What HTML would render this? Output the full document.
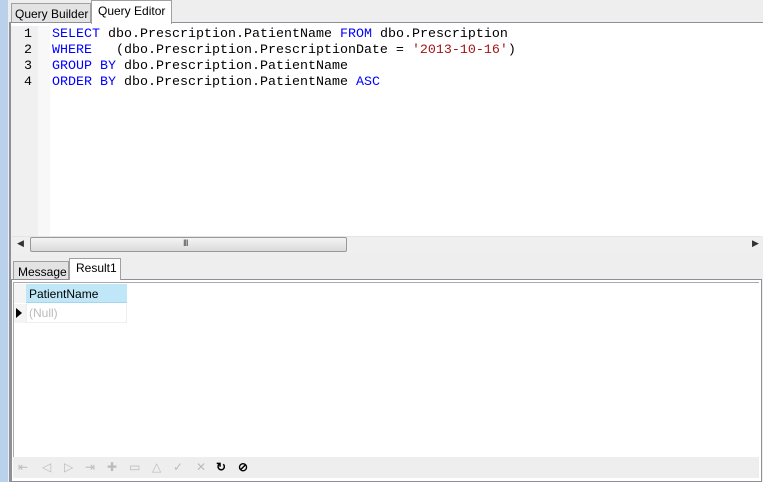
<!DOCTYPE html>
<html><head><style>
*{margin:0;padding:0;box-sizing:border-box}
body{width:763px;height:482px;background:#eeeeee;position:relative;overflow:hidden;font-family:"Liberation Sans",sans-serif;font-size:12px;color:#000}
.a{position:absolute}
.code{font-family:"Liberation Mono",monospace;font-size:13.33px;line-height:16px;white-space:pre}
.k{color:#0000ff}.s{color:#a31515}
.ic{position:absolute;top:460px;font-size:12px;color:#bbb}
</style></head><body>
<div class="a" style="left:0;top:0;width:8px;height:482px;background:#b9d1ea"></div>
<div class="a" style="left:9px;top:22px;width:2px;height:460px;background:#8e8f99"></div>
<!-- top tabs -->
<div class="a" style="left:11px;top:3px;width:80px;height:20px;border:1px solid #a0a0a0;border-bottom:none;background:#e3e3e3;padding:3px 0 0 3px">Query Builder</div>
<div class="a" style="left:91px;top:0;width:81px;height:24px;border:1px solid #a0a0a0;border-bottom:none;background:#fff;padding:3px 0 0 6px;z-index:2">Query Editor</div>
<div class="a" style="left:9px;top:22px;width:754px;height:1px;background:#8e8f99"></div>
<div class="a" style="left:11px;top:25px;width:750px;height:1px;background:#a0a0a0"></div>
<!-- editor -->
<div class="a" style="left:11px;top:23px;width:752px;height:213px;background:#fff"></div>
<div class="a" style="left:11px;top:26px;width:27px;height:210px;background:#f0f0f0"></div>
<div class="a" style="left:38px;top:26px;width:12px;height:210px;background:#f8f8f8"></div>
<div class="a code" style="left:24px;top:27px;color:#000">1
2
3
4</div>
<div class="a code" style="left:52px;top:27px"><span class="k">SELECT</span> dbo.Prescription.PatientName <span class="k">FROM</span> dbo.Prescription
<span class="k">WHERE</span>   (dbo.Prescription.PrescriptionDate = <span class="s">'2013-10-16'</span>)
<span class="k">GROUP BY</span> dbo.Prescription.PatientName
<span class="k">ORDER BY</span> dbo.Prescription.PatientName <span class="k">ASC</span></div>
<!-- scrollbar -->
<div class="a" style="left:11px;top:236px;width:750px;height:17px;background:#efefef;border-top:1px solid #e4e4e4"></div>
<div class="a" style="left:17px;top:238px;font-size:9px;color:#333">◀</div>
<div class="a" style="left:752px;top:238px;font-size:9px;color:#333">▶</div>
<div class="a" style="left:30px;top:237px;width:317px;height:15px;border:1px solid #999;border-radius:2px;background:linear-gradient(#f4f4f4,#dadada)"></div>
<div class="a" style="left:183px;top:238px;font-size:9px;color:#444;letter-spacing:-1px">III</div>
<!-- bottom tabs -->
<div class="a" style="left:13px;top:261px;width:56px;height:19px;border:1px solid #a0a0a0;border-bottom:none;background:#e3e3e3;padding:3px 0 0 4px">Message</div>
<div class="a" style="left:69px;top:258px;width:52px;height:22px;border:1px solid #a0a0a0;border-bottom:none;background:#fff;padding:2px 0 0 6px;z-index:2">Result1</div>
<div class="a" style="left:11px;top:279px;width:751px;height:203px;border:1px solid #8e8f99;background:#fff"></div>
<div class="a" style="left:13px;top:282px;width:746px;height:1px;background:#aaa"></div>
<div class="a" style="left:13px;top:282px;width:1px;height:175px;background:#aaa"></div>
<!-- grid -->
<div class="a" style="left:14px;top:284px;width:12px;height:19px;background:#f4f4f4"></div>
<div class="a" style="left:26px;top:284px;width:101px;height:19px;background:#bfe7f7;border-bottom:1px solid #a6d6ee;padding:3px 0 0 3px">PatientName</div>
<div class="a" style="left:14px;top:304px;width:12px;height:19px;background:#f4f4f4"></div>
<div class="a" style="left:16px;top:308px;width:0;height:0;border-top:5px solid transparent;border-bottom:5px solid transparent;border-left:6px solid #000"></div>
<div class="a" style="left:26px;top:304px;width:101px;height:19px;border:1px solid #eee;border-top:none;padding:2px 0 0 2px;color:#bbb">(Null)</div>
<!-- toolbar -->
<div class="a" style="left:13px;top:457px;width:746px;height:21px;background:#eeeeee"></div>
<span class="ic" style="left:18px">⇤</span>
<span class="ic" style="left:42px">◁</span>
<span class="ic" style="left:64px">▷</span>
<span class="ic" style="left:85px">⇥</span>
<span class="ic" style="left:107px">✚</span>
<span class="ic" style="left:129px">▭</span>
<span class="ic" style="left:152px">△</span>
<span class="ic" style="left:173px">✓</span>
<span class="ic" style="left:196px">✕</span>
<span class="ic" style="left:216px;color:#000;font-weight:bold">↻</span>
<span class="ic" style="left:238px;color:#000;font-weight:bold">⊘</span>
</body></html>
